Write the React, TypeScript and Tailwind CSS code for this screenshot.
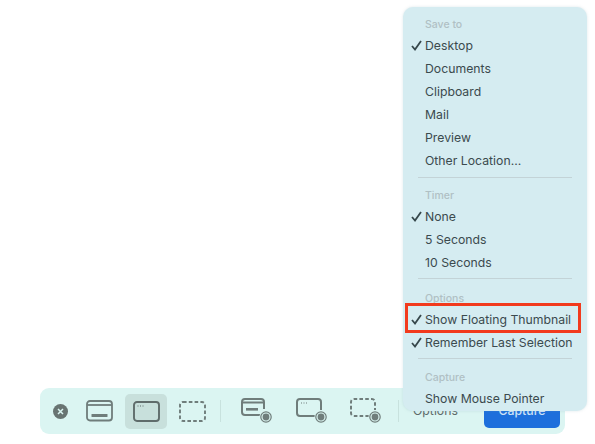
const font = { fontFamily: '"Inter", "Liberation Sans", sans-serif' };

function Check() {
  return (
    <svg width="11" height="11" viewBox="0 0 11 11" className="absolute left-[8px] top-[6px]" fill="none" stroke="#36474b" strokeWidth="1.8">
      <path d="M1 6l3 3.5L10 1" />
    </svg>
  );
}

function Item({ label, checked }: { label: string; checked?: boolean }) {
  return (
    <div className="relative h-[23px] pl-[22px] text-[12.25px] leading-[23px] text-[#3b4a4e] whitespace-nowrap">
      {checked && <Check />}
      {label}
    </div>
  );
}

function Head({ label }: { label: string }) {
  return <div className="h-[19px] pl-[22px] text-[10.5px] leading-[19px] font-medium text-[#b0c0c4]">{label}</div>;
}

function Sep() {
  return <div className="mx-[15px] h-px bg-[#c3d3d7]" />;
}

const c = "#6f7d7b";

function Rec() {
  return (
    <>
      <circle cx="25" cy="19" r="6.5" fill="#dbf5f2" stroke="none" />
      <circle cx="25" cy="19" r="5.2" fill="none" stroke={c} strokeWidth="1.2" />
      <circle cx="25" cy="19" r="3.4" fill={c} stroke="none" />
    </>
  );
}

function Icon({ children }: { children: React.ReactNode }) {
  return (
    <svg width="32" height="26" viewBox="0 0 32 26" fill="none" stroke={c} strokeWidth="2">
      {children}
    </svg>
  );
}

export default function App() {
  return (
    <div className="relative h-[444px] w-[595px] overflow-hidden bg-white pl-[40px] pt-[388px]" style={font}>
      <div className="flex h-[46px] w-[525px] items-center rounded-[9px] bg-[#dbf5f2] pl-[13px]">
        <div className="flex h-[15px] w-[15px] items-center justify-center rounded-full bg-[#687472]">
          <svg width="7" height="7" viewBox="0 0 7 7" stroke="#dbf5f2" strokeWidth="1.5">
            <path d="M1 1l5 5M6 1L1 6" />
          </svg>
        </div>
        <div className="ml-[17px] flex h-[26px] w-[28px] items-center justify-center">
          <svg width="27" height="22" viewBox="0 0 27 22" fill="none" stroke={c} strokeWidth="1.8">
            <rect x="1" y="1" width="25" height="19.5" rx="3" />
            <path d="M1 5h25" />
            <rect x="5.5" y="14" width="16" height="3" fill={c} stroke="none" rx="0.5" />
          </svg>
        </div>
        <div className="ml-[12px] flex h-[35px] w-[42px] items-center justify-center rounded-[5px] bg-[#c8e0dc]">
          <svg width="27" height="21" viewBox="0 0 27 21" fill="none" stroke="#5f6c6b" strokeWidth="1.9">
            <rect x="1" y="1" width="25" height="19" rx="3" />
            <path d="M4.5 5h1M7 5h1M9.5 5h1" strokeWidth="1.1" />
          </svg>
        </div>
        <div className="ml-[11px] flex h-[26px] w-[28px] items-center justify-center">
          <svg width="27" height="21" viewBox="0 0 27 21" fill="none" stroke={c} strokeWidth="1.9" strokeDasharray="3.6 2.2">
            <rect x="1" y="1" width="25" height="19" rx="3" />
          </svg>
        </div>
        <div className="ml-[14px] h-[22px] w-px bg-[#c8e2de]" />
        <div className="ml-[20px]">
          <Icon>
            <path d="M19 17H4a3 3 0 0 1-3-3V4a3 3 0 0 1 3-3h16a3 3 0 0 1 3 3v7" />
            <path d="M1 4.5h22" />
            <rect x="5" y="10" width="12" height="2.6" fill={c} stroke="none" />
            <Rec />
          </Icon>
        </div>
        <div className="ml-[23px]">
          <Icon>
            <path d="M19 18H4a3 3 0 0 1-3-3V4a3 3 0 0 1 3-3h18a3 3 0 0 1 3 3v8" />
            <path d="M5 5h1M7.5 5h1M10 5h1" strokeWidth="1.1" />
            <Rec />
          </Icon>
        </div>
        <div className="ml-[22px]">
          <Icon>
            <path d="M19 18H4a3 3 0 0 1-3-3V4a3 3 0 0 1 3-3h18a3 3 0 0 1 3 3v8" strokeDasharray="3.6 2.2" />
            <Rec />
          </Icon>
        </div>
        <div className="ml-[16px] h-[22px] w-px bg-[#c8e2de]" />
        <div className="ml-[14px] w-[46px] text-[12.25px] text-[#5d6a69] whitespace-nowrap">Options</div>
        <div className="ml-[25px] mt-[1px] flex h-[32px] w-[76px] items-center justify-center rounded-[5px] bg-[#1d6fdc] text-[12.25px] font-medium text-[#cfe3f7]">
          Capture
        </div>
      </div>

      <div className="absolute left-[403px] top-[7px] h-[404px] w-[184px] rounded-[10px] bg-[#d5ecf1] pt-[8px] shadow-[0_0_3px_rgba(120,160,170,0.25)]">
        <Head label="Save to" />
        <Item label="Desktop" checked />
        <Item label="Documents" />
        <Item label="Clipboard" />
        <Item label="Mail" />
        <Item label="Preview" />
        <Item label="Other Location..." />
        <div className="h-[5px]" />
        <Sep />
        <div className="h-[8px]" />
        <Head label="Timer" />
        <Item label="None" checked />
        <Item label="5 Seconds" />
        <Item label="10 Seconds" />
        <div className="h-[4px]" />
        <Sep />
        <div className="h-[10px]" />
        <Head label="Options" />
        <Item label="Show Floating Thumbnail" checked />
        <Item label="Remember Last Selection" checked />
        <div className="h-[4px]" />
        <Sep />
        <div className="h-[9px]" />
        <Head label="Capture" />
        <Item label="Show Mouse Pointer" />
        <div className="absolute left-[2px] top-[296px] h-[30px] w-[176px] border-[3px] border-[#f23a1d]" />
      </div>
    </div>
  );
}
